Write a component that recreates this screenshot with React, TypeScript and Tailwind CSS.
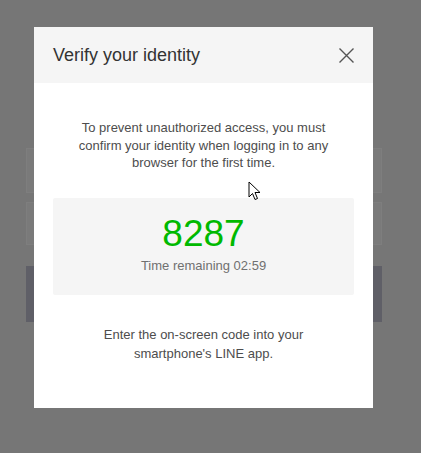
import React from "react";

export default function App() {
  return (
    <div
      className="relative w-[421px] h-[453px] overflow-hidden bg-[#767676]"
      style={{ fontFamily: '"Liberation Sans", Arial, sans-serif' }}
    >
      {/* background page */}
      <div className="flex flex-col px-[26px] pt-[148px] w-[408px]">
        <div className="h-[45px] border border-[#7e7e7e] bg-[#7a7a7a]" />
        <div className="mt-[9px] h-[43px] border border-[#7e7e7e] bg-[#7a7a7a]" />
        <div className="mt-[21px] h-[56px] bg-[#5f5f67]" />
      </div>

      {/* modal */}
      <div className="absolute left-[34px] top-[27px] w-[339px] h-[381px] bg-white flex flex-col">
        <div className="h-[56px] bg-[#f5f5f5] flex items-center justify-between pl-[19px] pr-[18px]">
          <span className="text-[18px] text-[#333] leading-none pb-[1px]">Verify your identity</span>
          <svg width="17" height="17" viewBox="0 0 17 17" className="mt-[1px]">
            <path d="M1.5 1.5 L15.5 15.5 M15.5 1.5 L1.5 15.5" stroke="#555" strokeWidth="1.4" fill="none" />
          </svg>
        </div>
        <div className="flex flex-col items-center px-[19px]">
          <p className="mt-[36px] w-[268px] text-center text-[13px] leading-[17.5px] text-[#4d4d4d]">
            To prevent unauthorized access, you must confirm your identity when logging in to any browser for the first time.
          </p>
          <div className="mt-[26px] w-full h-[97px] bg-[#f5f5f5] rounded-[2px] flex flex-col items-center pt-[14px]">
            <div className="text-[37px] leading-[44px] text-[#00b900]">8287</div>
            <div className="text-[13px] leading-[16px] text-[#707070] mt-[2px]">Time remaining 02:59</div>
          </div>
          <p className="mt-[30px] w-[268px] text-center text-[13px] leading-[19px] text-[#4d4d4d]">
            Enter the on-screen code into your smartphone's LINE app.
          </p>
        </div>
      </div>

      {/* mouse cursor */}
      <svg className="absolute left-[248px] top-[181px]" width="14" height="22" viewBox="0 0 14 22">
        <path
          d="M1 1 L1 16 L4.5 12.5 L7 18.5 L9.5 17.5 L7 11.5 L12 11.5 Z"
          fill="#fff"
          stroke="#000"
          strokeWidth="1"
          strokeLinejoin="miter"
        />
      </svg>
    </div>
  );
}
